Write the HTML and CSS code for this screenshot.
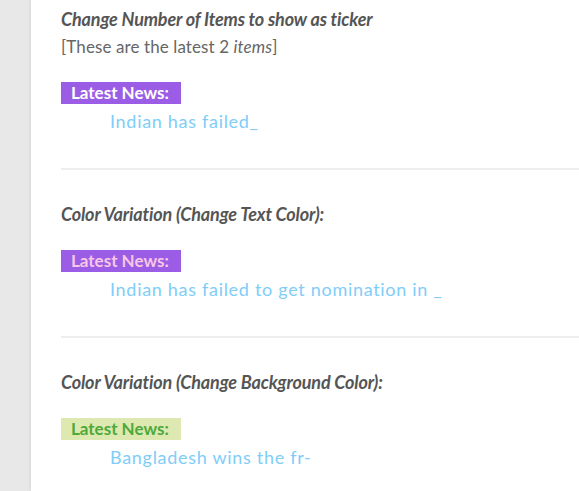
FILE: index.html
```html
<!DOCTYPE html>
<html>
<head>
<meta charset="utf-8">
<link rel="stylesheet" href="styles.css">
</head>
<body>
<div class="panel">
  <section class="demo first">
    <h4 class="title">Change Number of Items to show as ticker</h4>
    <p class="note">[These are the latest 2 <em>items</em>]</p>
    <div class="label purple">Latest News:</div>
    <div class="ticker">Indian has failed_</div>
  </section>
  <hr class="sep">
  <section class="demo">
    <h4 class="title">Color Variation (Change Text Color):</h4>
    <div class="label purple pink-text">Latest News:</div>
    <div class="ticker">Indian has failed to get nomination in _</div>
  </section>
  <hr class="sep">
  <section class="demo">
    <h4 class="title">Color Variation (Change Background Color):</h4>
    <div class="label green">Latest News:</div>
    <div class="ticker">Bangladesh wins the fr-</div>
  </section>
</div>
</body>
</html>
```

FILE: styles.css
```css
html, body {
  margin: 0;
  padding: 0;
}
body {
  background: #e8e8e8;
  font-family: Lato, "Open Sans", sans-serif;
  font-size: 16px;
  overflow: hidden;
  height: 491px;
}
.panel {
  margin-left: 31px;
  background: #fff;
  min-height: 491px;
  box-shadow: -1px 0 3px rgba(0, 0, 0, 0.08);
  padding: 6px 0 0 30px;
  box-sizing: border-box;
}
.demo {
  display: flex;
  flex-direction: column;
  align-items: flex-start;
}
.title {
  margin: 0;
  font-weight: 700;
  font-style: italic;
  font-size: 18px;
  line-height: 27px;
  color: #555;
  letter-spacing: -0.15px;
}
.note {
  margin: 0;
  font-size: 17px;
  line-height: 27px;
  color: #666;
  letter-spacing: 0.1px;
}
.note em {
  font-style: italic;
}
.label {
  margin-top: 22px;
  width: 120px;
  height: 22px;
  box-sizing: border-box;
  padding-left: 10px;
  font-weight: 700;
  font-size: 17px;
  line-height: 22px;
  color: #fff;
}
.purple {
  background: #9b5de5;
}
.pink-text {
  color: #f8c6e6;
}
.green {
  background: #dde9b1;
  color: #4ea93a;
}
.ticker {
  margin-top: 5px;
  margin-left: 49px;
  font-size: 18px;
  line-height: 24px;
  color: #80cdf8;
  letter-spacing: 0.7px;
}
.sep {
  margin: 35px 0 31px 0;
  border: 0;
  height: 2px;
  background: #eeeeee;
}
```
